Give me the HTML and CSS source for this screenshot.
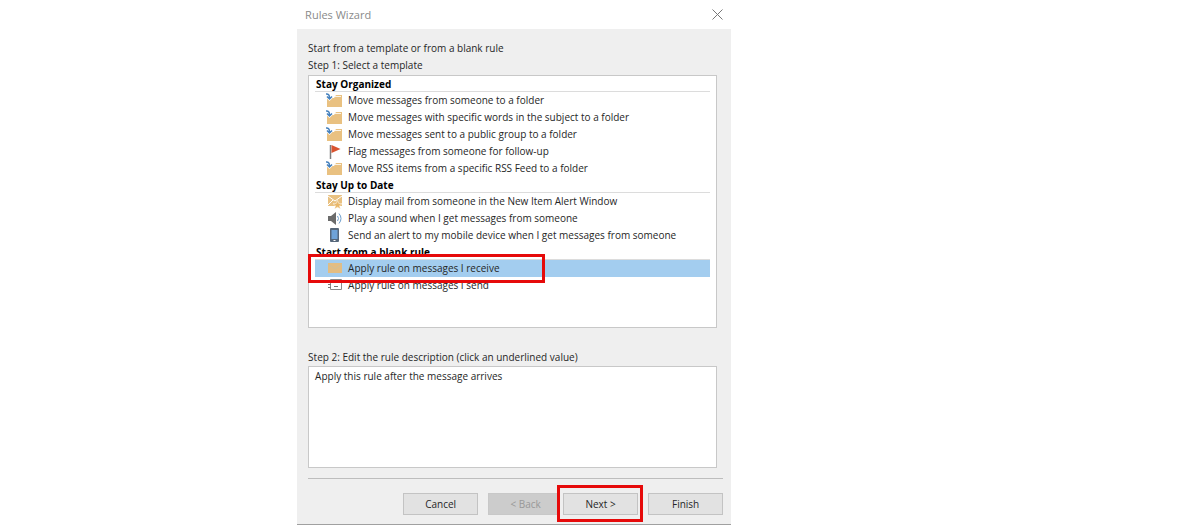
FILE: index.html
```html
<!DOCTYPE html>
<html lang="en">
    <head>
        <meta charset="utf-8">
        <meta name="viewport" content="width=device-width, initial-scale=1.0">
        <title>Rules Wizard</title>
        <link rel="stylesheet" href="styles.css">
    </head>
    <body>
        <!-- shared icons -->
        <svg class="sprite" aria-hidden="true">
            <symbol id="folder" viewBox="0 0 16 16">
                <path d="M1 5h7l2-3h6v12H1z" fill="#e9c181"/>
                <path d="M9 3.500h6" stroke="#fbf3e4" fill="none"/>
                <path d="M0 1q3.500-.5 3.500 4M1 3.500l2.500 2.500L6 3.500" fill="none" stroke="#fff" stroke-width="3"/>
                <path d="M0 1q3.500-.5 3.500 4M1 3.500l2.500 2.500L6 3.500" fill="none" stroke="#4580bd" stroke-width="1.500"/>
            </symbol>
            <symbol id="flag" viewBox="0 0 16 16">
                <path d="M4.500 1v14" stroke="#7d7d7d" stroke-width="1.500"/>
                <path d="M5.500 1l9 4-9 4z" fill="#d9532f"/>
            </symbol>
            <symbol id="alert" viewBox="0 0 16 16">
                <path d="M2 1h14v11H2z" fill="#e9c181"/>
                <path d="M2 2l7 5 7-5M2 11l5-5" fill="none" stroke="#fff"/>
                <path d="M11.500 6.500l1.300 3 3.200.2-2.500 2 1 3.300-3-1.800-3 1.800 1-3.300-2.500-2 3.200-.2z" fill="#e9b769" stroke="#fff" stroke-width=".5"/>
            </symbol>
            <symbol id="sound" viewBox="0 0 16 16">
                <path d="M2 5h3l5-4v13l-5-4H2z" fill="#6b6b6b"/>
                <path d="M11.500 5q2 2.500 0 5M13 2.500q4 5 0 10" fill="none" stroke="#6f9fcd"/>
            </symbol>
            <symbol id="phone" viewBox="0 0 16 16">
                <rect x="4" y="0" width="9" height="14" rx="1" fill="#56677a"/>
                <path d="M5.500 2h6v9h-6z" fill="#6fa3d8"/>
                <path d="M7.500 12.500h2" stroke="#fff"/>
            </symbol>
            <symbol id="mail" viewBox="0 0 16 16">
                <path d="M2 2h14v10H2z" fill="#e3bd82"/>
                <path d="M2 3l7 5 7-5" fill="none" stroke="#cfc09a"/>
            </symbol>
            <symbol id="send" viewBox="0 0 16 16">
                <path d="M4.500 1.500h11v10h-11z" fill="#fff" stroke="#8a8a8a"/>
                <path d="M2 6.500h3M2 9.500h3M8 8.500h4" stroke="#777" fill="none"/>
            </symbol>
        </svg>

        <main class="wizard">
            <header class="title-bar">
                <h1>Rules Wizard</h1>
                <button class="close" aria-label="Close">
                    <svg viewBox="0 0 11 11"><path d="M.5.5l10 10M10.500.5l-10 10" fill="none" stroke="#777"/></svg>
                </button>
            </header>

            <div class="content">
                <p>Start from a template or from a blank rule</p>
                <p id="step1">Step 1: Select a template</p>
                <div class="templates" role="listbox" aria-labelledby="step1">
                    <h2>Stay Organized</h2>
                    <ul>
                        <li role="option"><svg><use href="#folder"/></svg>Move messages from someone to a folder</li>
                        <li role="option"><svg><use href="#folder"/></svg>Move messages with specific words in the subject to a folder</li>
                        <li role="option"><svg><use href="#folder"/></svg>Move messages sent to a public group to a folder</li>
                        <li role="option"><svg><use href="#flag"/></svg>Flag messages from someone for follow-up</li>
                        <li role="option"><svg><use href="#folder"/></svg>Move RSS items from a specific RSS Feed to a folder</li>
                    </ul>
                    <h2>Stay Up to Date</h2>
                    <ul>
                        <li role="option"><svg><use href="#alert"/></svg>Display mail from someone in the New Item Alert Window</li>
                        <li role="option"><svg><use href="#sound"/></svg>Play a sound when I get messages from someone</li>
                        <li role="option"><svg><use href="#phone"/></svg>Send an alert to my mobile device when I get messages from someone</li>
                    </ul>
                    <h2>Start from a blank rule</h2>
                    <ul>
                        <li role="option" aria-selected="true" class="selected"><svg><use href="#mail"/></svg>Apply rule on messages I receive<span class="mark mark-row"></span></li>
                        <li role="option"><svg><use href="#send"/></svg>Apply rule on messages I send</li>
                    </ul>
                </div>

                <label for="description">Step 2: Edit the rule description (click an underlined value)</label>
                <textarea id="description" readonly>Apply this rule after the message arrives</textarea>
            </div>

            <footer class="buttons">
                <button>Cancel</button>
                <div class="pair">
                    <button disabled>&lt; Back</button>
                    <div class="next">
                        <span class="mark mark-next"></span>
                        <button>Next &gt;</button>
                    </div>
                </div>
                <button>Finish</button>
            </footer>
        </main>
    </body>
</html>
```
FILE: styles.css
```css
* {
    box-sizing: border-box;
}
body {
    display: grid;
    grid-template-columns: 17fr 434px 27fr;
    margin: 0;
    background: #fff;
    color: #262626;
    font-family: "Open Sans", "Noto Sans", sans-serif;
    font-size: 10px;
    line-height: 17px;
}
.sprite {
    position: absolute;
    width: 0;
    height: 0;
}
.wizard {
    grid-column: 2;
    background: #efefef;
    border-bottom: 1px solid #a0a0a0;
}
.title-bar {
    display: flex;
    justify-content: space-between;
    align-items: center;
    height: 29px;
    padding: 0 8px;
    background: #fff;
}
h1, h2, p, ul {
    margin: 0;
    padding: 0;
}
h1 {
    color: #8a8a8a;
    font-size: 11px;
    font-weight: normal;
}
.close {
    display: flex;
    padding: 0;
    border: 0;
    background: none;
}
.close svg {
    width: 11px;
    height: 11px;
}
.content {
    display: flex;
    flex-direction: column;
    padding: 11px 14px 10px 11px;
}
.templates {
    height: 253px;
    margin-top: 1px;
    padding: 0 6px;
    background: #fff;
    border: 1px solid #c8c8c8;
}
h2 {
    height: 16px;
    padding-left: 1px;
    border-bottom: 1px solid #dcdcdc;
    color: #000;
    font-size: 10px;
    line-height: 17px;
}
ul {
    list-style: none;
}
li {
    display: flex;
    align-items: center;
    gap: 6px;
    height: 17px;
    padding-left: 11px;
}
li svg {
    width: 16px;
    height: 16px;
}
.selected {
    position: relative;
    background: #a3cdef;
}
.mark {
    position: absolute;
    border: 3px solid #e60a0a;
}
.mark-row {
    top: -6px;
    left: -7px;
    width: 237px;
    height: 29px;
}
label {
    margin-top: 21px;
}
textarea {
    height: 102px;
    padding: 1px 6px;
    background: #fff;
    border: 1px solid #c8c8c8;
    outline: 0;
    color: inherit;
    font: inherit;
    resize: none;
}
.buttons {
    display: flex;
    justify-content: flex-end;
    gap: 10px;
    margin: 0 8px 0 11px;
    padding: 14px 0 9px;
    border-top: 1px solid #bdbdbd;
}
.pair {
    display: flex;
}
.next {
    position: relative;
}
.buttons button {
    width: 75px;
    height: 22px;
    padding: 0;
    background: #e2e2e2;
    border: 1px solid #c3c3c3;
    color: #262626;
    font: inherit;
}
.buttons button:disabled {
    background: #cccccc;
    border-color: #c8c8c8;
    color: #989898;
}
.mark-next {
    top: -8px;
    left: -6px;
    width: 86px;
    height: 37px;
    background: #efefef;
}
.next button {
    position: relative;
}
```
